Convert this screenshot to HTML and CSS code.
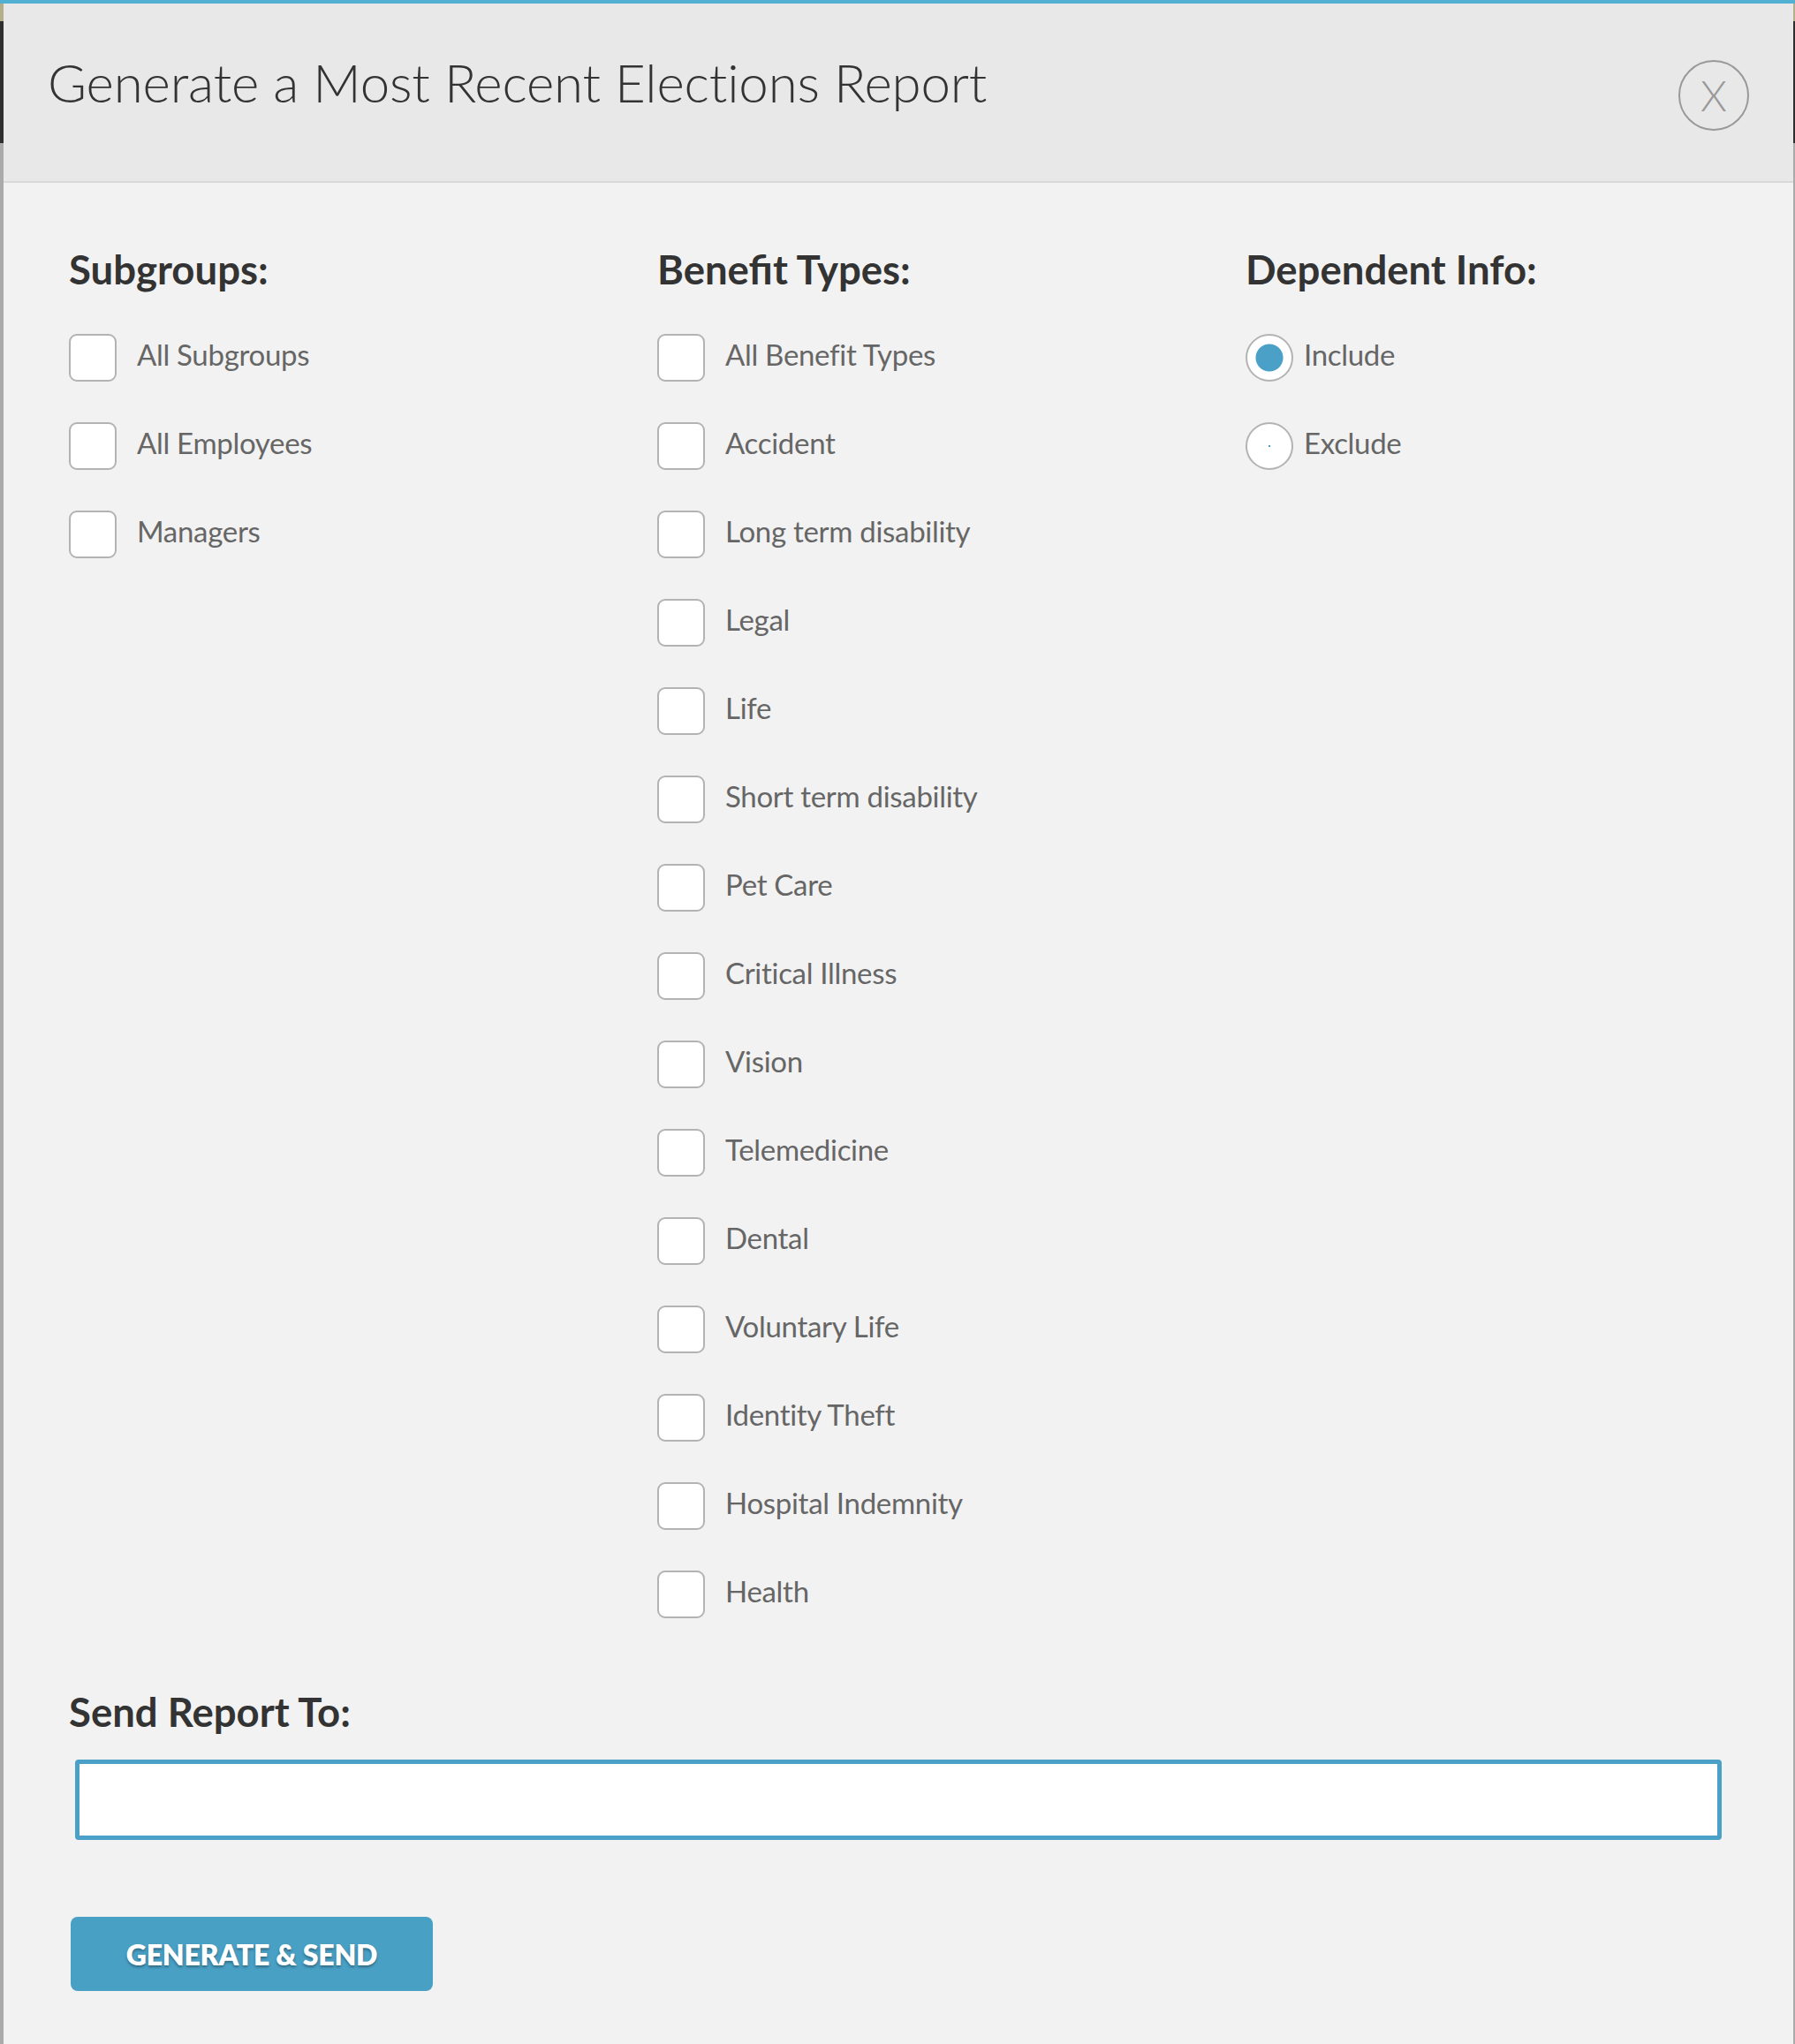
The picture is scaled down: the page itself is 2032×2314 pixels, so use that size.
FILE: index.html
```html
<!DOCTYPE html>
<html lang="en">
<head>
    <meta charset="UTF-8">
    <meta name="viewport" content="width=device-width, initial-scale=1.0">
    <title>Generate a Most Recent Elections Report</title>
    <link rel="stylesheet" href="styles.css">
</head>
<body>
    <div class="topbar"></div>
    <div class="modal">
        <div class="modal-header">
            <h1>Generate a Most Recent Elections Report</h1>
            <button type="button" class="close">X</button>
        </div>
        <form class="modal-body">
            <div class="columns">
                <div class="column">
                    <h2>Subgroups:</h2>
                    <label class="option"><input type="checkbox" name="subgroup" value="all"><span>All Subgroups</span></label>
                    <label class="option"><input type="checkbox" name="subgroup" value="employees"><span>All Employees</span></label>
                    <label class="option"><input type="checkbox" name="subgroup" value="managers"><span>Managers</span></label>
                </div>
                <div class="column">
                    <h2>Benefit Types:</h2>
                    <label class="option"><input type="checkbox" name="benefit"><span>All Benefit Types</span></label>
                    <label class="option"><input type="checkbox" name="benefit"><span>Accident</span></label>
                    <label class="option"><input type="checkbox" name="benefit"><span>Long term disability</span></label>
                    <label class="option"><input type="checkbox" name="benefit"><span>Legal</span></label>
                    <label class="option"><input type="checkbox" name="benefit"><span>Life</span></label>
                    <label class="option"><input type="checkbox" name="benefit"><span>Short term disability</span></label>
                    <label class="option"><input type="checkbox" name="benefit"><span>Pet Care</span></label>
                    <label class="option"><input type="checkbox" name="benefit"><span>Critical Illness</span></label>
                    <label class="option"><input type="checkbox" name="benefit"><span>Vision</span></label>
                    <label class="option"><input type="checkbox" name="benefit"><span>Telemedicine</span></label>
                    <label class="option"><input type="checkbox" name="benefit"><span>Dental</span></label>
                    <label class="option"><input type="checkbox" name="benefit"><span>Voluntary Life</span></label>
                    <label class="option"><input type="checkbox" name="benefit"><span>Identity Theft</span></label>
                    <label class="option"><input type="checkbox" name="benefit"><span>Hospital Indemnity</span></label>
                    <label class="option"><input type="checkbox" name="benefit"><span>Health</span></label>
                </div>
                <div class="column">
                    <h2>Dependent Info:</h2>
                    <label class="option radio"><input type="radio" name="dependents" value="include" checked><span>Include</span></label>
                    <label class="option radio"><input type="radio" name="dependents" value="exclude"><span>Exclude</span></label>
                </div>
            </div>

            <h2 class="send-title">Send Report To:</h2>
            <input type="text" class="email" name="email">

            <button type="submit" class="submit">Generate &amp; Send</button>
        </form>
    </div>
</body>
</html>
```

FILE: styles.css
```css
body { margin: 0; font-family: Lato, "Open Sans", sans-serif; background: linear-gradient(to bottom, #b3ae8c 24px, #2e2e2e 24px, #2e2e2e 162px, #aaa 162px); min-height: 2314px; }
.topbar { height: 4px; background: #52b0d2; }
.modal { margin: 0 2px 0 4px; background: #f2f2f2; min-height: 2310px; }
.modal-header { display: flex; justify-content: space-between; align-items: flex-start; height: 201px; padding: 0 50px 0 50px; background: #e8e8e8; border-bottom: 2px solid #d9d9d9; }
h1 { margin: 59px 0 0; font-size: 60px; line-height: 60px; font-weight: 300; color: #333; letter-spacing: -0.15px; }
.close { margin-top: 64px; width: 80px; height: 80px; padding: 0; border: 2px solid #999; border-radius: 50%; background: transparent; color: #999; font-family: Lato, sans-serif; font-weight: 300; font-size: 48px; line-height: 48px; display: flex; align-items: center; justify-content: center; cursor: pointer; }
.modal-body { padding: 76px 74px 0; }
.columns { display: grid; grid-template-columns: 666px 666px 1fr; }
h2 { margin: 0; font-size: 45.5px; line-height: 44px; font-weight: 700; color: #333; }
.column h2 { margin-bottom: 51px; }
.option { display: flex; align-items: center; height: 54px; margin-bottom: 46px; cursor: pointer; }
.option input { appearance: none; -webkit-appearance: none; margin: 0 23px 0 0; width: 54px; height: 54px; flex: none; background: #fff; border: 2px solid #b3b3b3; border-radius: 9px; }
.option span { font-size: 33px; line-height: 34px; letter-spacing: -0.3px; padding-bottom: 8px; color: #666; }
.radio input { border-radius: 50%; margin-right: 12px; background: radial-gradient(circle, #4aa0c6 0 1px, #fff 1.5px); }
.radio input:checked { background: radial-gradient(circle, #4aa0c6 0 15px, #fff 16px); }
.send-title { margin-top: 38px; }
.email { display: block; box-sizing: border-box; width: calc(100% - 14px); height: 91px; margin: 32px 7px 0; border: 5px solid #4aa0c6; border-radius: 4px; background: #fff; font-size: 32px; padding: 0 20px; outline: none; }
.submit { display: block; margin: 87px 0 0 2px; width: 410px; height: 84px; border: none; border-radius: 8px; background: #49a0c5; color: #fff; font-family: Lato, sans-serif; font-size: 32px; font-weight: 800; letter-spacing: -0.2px; text-transform: uppercase; text-shadow: 0 2px 3px rgba(0,0,0,0.35); cursor: pointer; }
```
